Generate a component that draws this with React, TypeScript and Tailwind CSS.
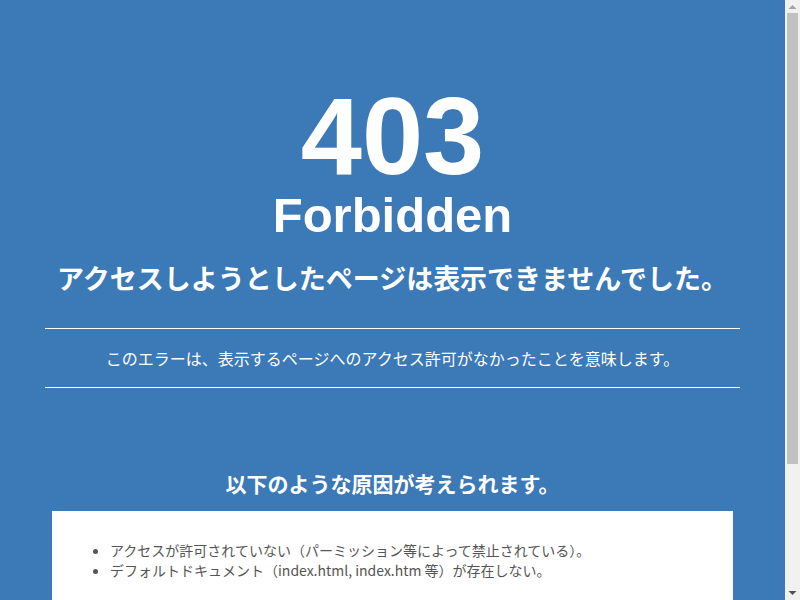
const Scrollbar = () => (
  <div className="flex w-[15px] shrink-0 flex-col items-center bg-[#f1f1f1]">
    <svg width="15" height="13" viewBox="0 0 15 13" className="shrink-0">
      <polygon points="3.5,9 7.5,5 11.5,9" fill="#a3a3a3" />
    </svg>
    <div className="h-[451px] w-[11px] bg-[#c1c1c1]" />
    <div className="flex-1" />
    <svg width="15" height="13" viewBox="0 0 15 13" className="shrink-0">
      <polygon points="3.5,4 11.5,4 7.5,8" fill="#505050" />
    </svg>
  </div>
);

export default function App() {
  return (
    <div className="flex h-screen overflow-hidden bg-[#3b79b7] font-['Noto_Sans_CJK_JP','Noto_Sans',sans-serif] text-white">
      <div className="min-w-0 flex-1 overflow-hidden">
        <div className="px-[45px] pt-[81px] pb-[38px] text-center">
          <h1 className="font-['Liberation_Sans',Arial,sans-serif] text-[110px] font-bold leading-none">403</h1>
          <h2 className="font-['Liberation_Sans',Arial,sans-serif] text-[49px] font-bold leading-none">Forbidden</h2>
          <p className="mt-[20px] text-[27px] font-bold leading-[36px]">アクセスしようとしたページは表示できませんでした。</p>
          <div className="mt-[32px] border-y border-white py-[17px] text-[16px] leading-[24px]">
            このエラーは、表示するページへのアクセス許可がなかったことを意味します。
          </div>
          <h3 className="mt-[80px] text-[21px] font-bold leading-[30px]">以下のような原因が考えられます。</h3>
          <div className="mx-[7px] mt-[13px] bg-white px-[43px] pt-[29px] pb-[140px] text-left text-[14px] leading-[20px] text-[#555]">
            <ul className="list-disc pl-[15px]">
              <li>アクセスが許可されていない（パーミッション等によって禁止されている）。</li>
              <li>デフォルトドキュメント（index.html, index.htm 等）が存在しない。</li>
            </ul>
          </div>
        </div>
      </div>
      <Scrollbar />
    </div>
  );
}
